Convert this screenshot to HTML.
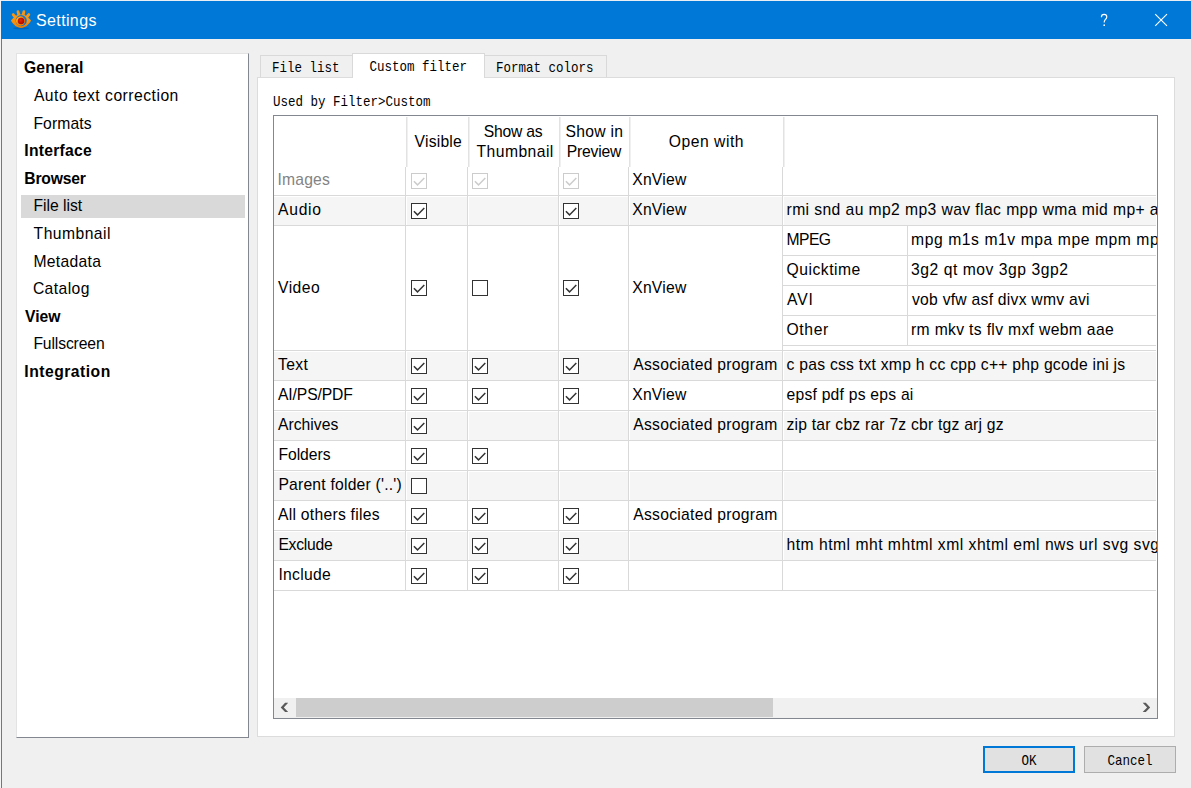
<!DOCTYPE html>
<html>
<head>
<meta charset="utf-8">
<title>Settings</title>
<style>
*{box-sizing:border-box;margin:0;padding:0}
html,body{width:1191px;height:788px;overflow:hidden;background:#f0f0f0}
body{font-family:"Liberation Sans",sans-serif;font-size:15px;color:#000;position:relative}
.abs{position:absolute}
#desk-top{left:0;top:0;width:1191px;height:1px;background:#e9eef5}
#desk-left{left:0;top:0;width:1px;height:788px;background:#f4f4f4}
#titlebar{left:1px;top:1px;width:1190px;height:38px;background:#0078d7}
#lborder{left:1px;top:39px;width:1px;height:749px;background:#2b8ad9}
#title{top:11px;color:#fff;font-size:16px;line-height:20px;white-space:nowrap}
/* sidebar */
#side{left:16px;top:53px;width:233px;height:685px;background:#fff;border:1px solid;border-color:#e3e3e3 #828790 #828790 #e3e3e3}
.nav{position:absolute;white-space:nowrap;line-height:20px;height:20px;font-size:15px}
.nav.b{font-weight:bold;left:25px}
.nav.s{left:34px}
#sel{left:21px;top:195px;width:224px;height:23px;background:#d9d9d9}
/* content */
#panel{left:257px;top:77px;width:918px;height:660px;background:#fff;border:1px solid #dcdcdc}
.tab{position:absolute;background:#f0f0f0;border:1px solid #d9d9d9;border-bottom:none}
.mono{font-family:"Liberation Mono",monospace;font-size:12.5px;white-space:nowrap;position:absolute;line-height:16px;transform-origin:0 50%;transform:scaleY(1.2);color:#000}
/* table */
#box{left:273px;top:115px;width:885px;height:604px;border:1px solid #828790;background:#fff;overflow:hidden}
.hl{position:absolute;height:1px;background:#d9d9d9}
.vl{position:absolute;width:1px;background:#d9d9d9}
.alt{position:absolute;background:#f5f5f5;left:0;width:883px;height:29px}
.t{position:absolute;white-space:nowrap;line-height:20px;height:20px;font-size:15.7px}
.th{position:absolute;text-align:center;line-height:20px;font-size:15px;white-space:nowrap}
.cb{position:absolute;width:16px;height:16px;border:1px solid #333;background:#fff}
.cb.dis{border-color:#ccc}
.cb svg{position:absolute;left:-1px;top:-1px}
.btn{position:absolute;top:746px;width:92px;height:27px;background:#e1e1e1;border:1px solid #adadad}
</style>
</head>
<body>
<div class="abs" id="desk-top"></div>
<div class="abs" id="desk-left"></div>
<div class="abs" id="titlebar"></div>
<div class="abs" id="lborder"></div>
<svg class="abs" style="left:6px;top:5px" width="30" height="30" viewBox="6 5 30 30">
<defs>
<radialGradient id="gp" cx="0.42" cy="0.4" r="0.65"><stop offset="0" stop-color="#e02c08"/><stop offset="0.55" stop-color="#c41200"/><stop offset="1" stop-color="#a00b00"/></radialGradient>
<linearGradient id="gb" x1="0" y1="0" x2="0" y2="1"><stop offset="0" stop-color="#ff9c10"/><stop offset="0.6" stop-color="#f98f0c"/><stop offset="1" stop-color="#ea7c05"/></linearGradient>
</defs>
<ellipse cx="21" cy="28.3" rx="8" ry="1" fill="#083a70" opacity="0.3"/>
<g stroke="#fc950f" stroke-width="2.8" stroke-linecap="round" fill="none">
<path d="M19 15.6 L18 11.6"/>
<path d="M23 15.6 L23.9 11.6"/>
<path d="M16 18 L13.2 14.6"/>
<path d="M26 18 L28.8 14.6"/>
</g>
<path d="M11 20.6 C12.6 18.6 14.4 16.8 16.4 15.6 C19.2 14.2 22.8 14.2 25.6 15.6 C27.6 16.8 29.4 18.6 31 20.6 C28.6 25.2 25 27.9 21 27.9 C17 27.9 13.4 25.2 11 20.6 Z" fill="url(#gb)"/>
<circle cx="21.2" cy="20.6" r="5.6" fill="#1672cc"/>
<circle cx="20.4" cy="21.1" r="4.6" fill="#f48808"/>
<path d="M16.6 22.8 A4.6 4.6 0 0 1 23.6 17.4 A5.6 5.6 0 0 0 16.6 22.8Z" fill="#ffae1c"/>
<circle cx="21.1" cy="21" r="3.2" fill="url(#gp)"/>
</svg>
<div class="abs" id="title" style="left:36px;letter-spacing:0.37px">Settings</div>
<svg class="abs" style="left:1095px;top:10px" width="80" height="20" viewBox="1095 10 80 20">
<path d="M1101.4 17.2 C1101.4 15.4 1102.6 14.4 1104.1 14.4 C1105.7 14.4 1106.8 15.4 1106.8 16.9 C1106.8 18.3 1105.9 19 1105.1 19.8 C1104.4 20.5 1104.2 21 1104.2 22.6" fill="none" stroke="#fff" stroke-width="1.15"/>
<circle cx="1104.2" cy="25.2" r="0.85" fill="#fff"/>
<path d="M1155.2 14.1 L1167 25.9 M1167 14.1 L1155.2 25.9" fill="none" stroke="#fff" stroke-width="1.15"/>
</svg>

<!-- sidebar -->
<div class="abs" id="side"></div>
<div class="abs" id="sel"></div>
<div class="t" style="font-weight:bold;left:24.0px;top:58px;letter-spacing:0.167px">General</div>
<div class="t" style="left:33.9px;top:86px;letter-spacing:0.489px">Auto text correction</div>
<div class="t" style="left:33.4px;top:114px;letter-spacing:0.1px">Formats</div>
<div class="t" style="font-weight:bold;left:24.3px;top:141px;letter-spacing:0.25px">Interface</div>
<div class="t" style="font-weight:bold;left:24.3px;top:169px;letter-spacing:-0.217px">Browser</div>
<div class="t" style="left:33.4px;top:196px;letter-spacing:-0.013px">File list</div>
<div class="t" style="left:33.6px;top:224px;letter-spacing:0.45px">Thumbnail</div>
<div class="t" style="left:33.4px;top:252px;letter-spacing:0.314px">Metadata</div>
<div class="t" style="left:32.9px;top:279px;letter-spacing:0.4px">Catalog</div>
<div class="t" style="font-weight:bold;left:25.0px;top:307px;letter-spacing:0.033px">View</div>
<div class="t" style="left:33.4px;top:334px;letter-spacing:-0.122px">Fullscreen</div>
<div class="t" style="font-weight:bold;left:24.3px;top:362px;letter-spacing:0.49px">Integration</div>

<!-- content panel -->
<div class="abs" id="panel"></div>

<!-- tabs -->
<div class="tab" style="left:260px;top:55px;width:93px;height:22px"></div>
<div class="tab" style="left:484px;top:55px;width:123px;height:22px;border-left:none"></div>
<div class="tab" style="left:352px;top:53px;width:133px;height:25px;background:#fff"></div>
<div class="mono" style="left:272px;top:59.7px">File list</div>
<div class="mono" style="left:369.5px;top:58.7px">Custom filter</div>
<div class="mono" style="left:496px;top:59.7px">Format colors</div>
<div class="mono" style="left:273px;top:93.7px">Used by Filter&gt;Custom</div>

<div class="abs" id="box">
<div class="alt" style="top:80px;height:29px"></div>
<div class="alt" style="top:235px;height:29px"></div>
<div class="alt" style="top:295px;height:29px"></div>
<div class="alt" style="top:355px;height:29px"></div>
<div class="alt" style="top:415px;height:29px"></div>
<div class="hl" style="left:0;top:80px;width:883px;background:#fff"></div>
<div class="hl" style="left:0;top:235px;width:883px;background:#fff"></div>
<div class="hl" style="left:0;top:295px;width:883px;background:#fff"></div>
<div class="hl" style="left:0;top:355px;width:883px;background:#fff"></div>
<div class="hl" style="left:0;top:415px;width:883px;background:#fff"></div>
<div class="vl" style="left:132px;top:50px;height:425px;background:#fff"></div>
<div class="vl" style="left:194px;top:50px;height:425px;background:#fff"></div>
<div class="vl" style="left:285px;top:50px;height:425px;background:#fff"></div>
<div class="vl" style="left:355px;top:50px;height:425px;background:#fff"></div>
<div class="vl" style="left:509px;top:50px;height:425px;background:#fff"></div>
<div class="hl" style="left:0;top:79px;width:883px"></div>
<div class="hl" style="left:0;top:109px;width:883px"></div>
<div class="hl" style="left:0;top:234px;width:883px"></div>
<div class="hl" style="left:0;top:264px;width:883px"></div>
<div class="hl" style="left:0;top:294px;width:883px"></div>
<div class="hl" style="left:0;top:324px;width:883px"></div>
<div class="hl" style="left:0;top:354px;width:883px"></div>
<div class="hl" style="left:0;top:384px;width:883px"></div>
<div class="hl" style="left:0;top:414px;width:883px"></div>
<div class="hl" style="left:0;top:444px;width:883px"></div>
<div class="hl" style="left:0;top:474px;width:883px"></div>
<div class="vl" style="left:131px;top:51px;height:424px"></div>
<div class="vl" style="left:193px;top:51px;height:424px"></div>
<div class="vl" style="left:284px;top:51px;height:424px"></div>
<div class="vl" style="left:354px;top:51px;height:424px"></div>
<div class="vl" style="left:508px;top:51px;height:424px"></div>
<div class="vl" style="left:132px;top:1px;height:50px;width:2px;background:linear-gradient(to right,#e2e2e2 50%,#f0f0f0 50%)"></div>
<div class="vl" style="left:194px;top:1px;height:50px;width:2px;background:linear-gradient(to right,#e2e2e2 50%,#f0f0f0 50%)"></div>
<div class="vl" style="left:285px;top:1px;height:50px;width:2px;background:linear-gradient(to right,#e2e2e2 50%,#f0f0f0 50%)"></div>
<div class="vl" style="left:355px;top:1px;height:50px;width:2px;background:linear-gradient(to right,#e2e2e2 50%,#f0f0f0 50%)"></div>
<div class="vl" style="left:509px;top:1px;height:50px;width:2px;background:linear-gradient(to right,#e2e2e2 50%,#f0f0f0 50%)"></div>
<div class="vl" style="left:882px;top:0;height:582px;background:#fff"></div>
<div class="t" style="left:140.6px;top:16px;letter-spacing:0.2px">Visible</div>
<div class="t" style="left:209.7px;top:6px;letter-spacing:-0.217px">Show as</div>
<div class="t" style="left:202.5px;top:26px;letter-spacing:0.45px">Thumbnail</div>
<div class="t" style="left:291.6px;top:6px;letter-spacing:0.267px">Show in</div>
<div class="t" style="left:292.8px;top:26px;letter-spacing:-0.2px">Preview</div>
<div class="t" style="left:394.7px;top:16px;letter-spacing:0.525px">Open with</div>
<div class="t" style="color:#838383;left:3.5px;top:54px;letter-spacing:0.16px">Images</div>
<div class="cb dis" style="left:137px;top:57px"><svg width="16" height="16" viewBox="0 0 16 16"><path d="M2.9 8.3 L6.5 11.9 L13.3 4.9" fill="none" stroke="#cccccc" stroke-width="1.5"/></svg></div>
<div class="cb dis" style="left:198px;top:57px"><svg width="16" height="16" viewBox="0 0 16 16"><path d="M2.9 8.3 L6.5 11.9 L13.3 4.9" fill="none" stroke="#cccccc" stroke-width="1.5"/></svg></div>
<div class="cb dis" style="left:289px;top:57px"><svg width="16" height="16" viewBox="0 0 16 16"><path d="M2.9 8.3 L6.5 11.9 L13.3 4.9" fill="none" stroke="#cccccc" stroke-width="1.5"/></svg></div>
<div class="t" style="left:358.2px;top:54px;letter-spacing:0.24px">XnView</div>
<div class="t" style="left:4.0px;top:84px;letter-spacing:0.725px">Audio</div>
<div class="cb" style="left:137px;top:87px"><svg width="16" height="16" viewBox="0 0 16 16"><path d="M2.9 8.3 L6.5 11.9 L13.3 4.9" fill="none" stroke="#333333" stroke-width="1.5"/></svg></div>
<div class="cb" style="left:289px;top:87px"><svg width="16" height="16" viewBox="0 0 16 16"><path d="M2.9 8.3 L6.5 11.9 L13.3 4.9" fill="none" stroke="#333333" stroke-width="1.5"/></svg></div>
<div class="t" style="left:358.2px;top:84px;letter-spacing:0.24px">XnView</div>
<div class="t" style="left:512.5px;top:84px;letter-spacing:0.402px">rmi snd au mp2 mp3 wav flac mpp wma mid mp+ aif aiff ogg</div>
<div class="t" style="left:4.0px;top:162px;letter-spacing:0.45px">Video</div>
<div class="cb" style="left:137px;top:164px"><svg width="16" height="16" viewBox="0 0 16 16"><path d="M2.9 8.3 L6.5 11.9 L13.3 4.9" fill="none" stroke="#333333" stroke-width="1.5"/></svg></div>
<div class="cb" style="left:198px;top:164px"></div>
<div class="cb" style="left:289px;top:164px"><svg width="16" height="16" viewBox="0 0 16 16"><path d="M2.9 8.3 L6.5 11.9 L13.3 4.9" fill="none" stroke="#333333" stroke-width="1.5"/></svg></div>
<div class="t" style="left:358.2px;top:162px;letter-spacing:0.24px">XnView</div>
<div class="t" style="left:4.0px;top:239px;letter-spacing:0.4px">Text</div>
<div class="cb" style="left:137px;top:242px"><svg width="16" height="16" viewBox="0 0 16 16"><path d="M2.9 8.3 L6.5 11.9 L13.3 4.9" fill="none" stroke="#333333" stroke-width="1.5"/></svg></div>
<div class="cb" style="left:198px;top:242px"><svg width="16" height="16" viewBox="0 0 16 16"><path d="M2.9 8.3 L6.5 11.9 L13.3 4.9" fill="none" stroke="#333333" stroke-width="1.5"/></svg></div>
<div class="cb" style="left:289px;top:242px"><svg width="16" height="16" viewBox="0 0 16 16"><path d="M2.9 8.3 L6.5 11.9 L13.3 4.9" fill="none" stroke="#333333" stroke-width="1.5"/></svg></div>
<div class="t" style="left:359.2px;top:239px;letter-spacing:0.276px">Associated program</div>
<div class="t" style="left:512.5px;top:239px;letter-spacing:0.254px">c pas css txt xmp h cc cpp c++ php gcode ini js</div>
<div class="t" style="left:4.0px;top:269px;letter-spacing:-0.125px">AI/PS/PDF</div>
<div class="cb" style="left:137px;top:272px"><svg width="16" height="16" viewBox="0 0 16 16"><path d="M2.9 8.3 L6.5 11.9 L13.3 4.9" fill="none" stroke="#333333" stroke-width="1.5"/></svg></div>
<div class="cb" style="left:198px;top:272px"><svg width="16" height="16" viewBox="0 0 16 16"><path d="M2.9 8.3 L6.5 11.9 L13.3 4.9" fill="none" stroke="#333333" stroke-width="1.5"/></svg></div>
<div class="cb" style="left:289px;top:272px"><svg width="16" height="16" viewBox="0 0 16 16"><path d="M2.9 8.3 L6.5 11.9 L13.3 4.9" fill="none" stroke="#333333" stroke-width="1.5"/></svg></div>
<div class="t" style="left:358.2px;top:269px;letter-spacing:0.24px">XnView</div>
<div class="t" style="left:512.5px;top:269px;letter-spacing:0.229px">epsf pdf ps eps ai</div>
<div class="t" style="left:4.0px;top:299px;letter-spacing:0.014px">Archives</div>
<div class="cb" style="left:137px;top:302px"><svg width="16" height="16" viewBox="0 0 16 16"><path d="M2.9 8.3 L6.5 11.9 L13.3 4.9" fill="none" stroke="#333333" stroke-width="1.5"/></svg></div>
<div class="t" style="left:359.2px;top:299px;letter-spacing:0.276px">Associated program</div>
<div class="t" style="left:512.5px;top:299px;letter-spacing:0.219px">zip tar cbz rar 7z cbr tgz arj gz</div>
<div class="t" style="left:4.4px;top:329px;letter-spacing:-0.033px">Folders</div>
<div class="cb" style="left:137px;top:332px"><svg width="16" height="16" viewBox="0 0 16 16"><path d="M2.9 8.3 L6.5 11.9 L13.3 4.9" fill="none" stroke="#333333" stroke-width="1.5"/></svg></div>
<div class="cb" style="left:198px;top:332px"><svg width="16" height="16" viewBox="0 0 16 16"><path d="M2.9 8.3 L6.5 11.9 L13.3 4.9" fill="none" stroke="#333333" stroke-width="1.5"/></svg></div>
<div class="t" style="left:4.4px;top:359px;letter-spacing:0.211px">Parent folder (&#x27;..&#x27;)</div>
<div class="cb" style="left:137px;top:362px"></div>
<div class="t" style="left:4.0px;top:389px;letter-spacing:0.26px">All others files</div>
<div class="cb" style="left:137px;top:392px"><svg width="16" height="16" viewBox="0 0 16 16"><path d="M2.9 8.3 L6.5 11.9 L13.3 4.9" fill="none" stroke="#333333" stroke-width="1.5"/></svg></div>
<div class="cb" style="left:198px;top:392px"><svg width="16" height="16" viewBox="0 0 16 16"><path d="M2.9 8.3 L6.5 11.9 L13.3 4.9" fill="none" stroke="#333333" stroke-width="1.5"/></svg></div>
<div class="cb" style="left:289px;top:392px"><svg width="16" height="16" viewBox="0 0 16 16"><path d="M2.9 8.3 L6.5 11.9 L13.3 4.9" fill="none" stroke="#333333" stroke-width="1.5"/></svg></div>
<div class="t" style="left:359.2px;top:389px;letter-spacing:0.276px">Associated program</div>
<div class="t" style="left:4.4px;top:419px;letter-spacing:-0.233px">Exclude</div>
<div class="cb" style="left:137px;top:422px"><svg width="16" height="16" viewBox="0 0 16 16"><path d="M2.9 8.3 L6.5 11.9 L13.3 4.9" fill="none" stroke="#333333" stroke-width="1.5"/></svg></div>
<div class="cb" style="left:198px;top:422px"><svg width="16" height="16" viewBox="0 0 16 16"><path d="M2.9 8.3 L6.5 11.9 L13.3 4.9" fill="none" stroke="#333333" stroke-width="1.5"/></svg></div>
<div class="cb" style="left:289px;top:422px"><svg width="16" height="16" viewBox="0 0 16 16"><path d="M2.9 8.3 L6.5 11.9 L13.3 4.9" fill="none" stroke="#333333" stroke-width="1.5"/></svg></div>
<div class="t" style="left:512.5px;top:419px;letter-spacing:0.488px">htm html mht mhtml xml xhtml eml nws url svg svgz db ini</div>
<div class="t" style="left:4.4px;top:449px;letter-spacing:0.3px">Include</div>
<div class="cb" style="left:137px;top:452px"><svg width="16" height="16" viewBox="0 0 16 16"><path d="M2.9 8.3 L6.5 11.9 L13.3 4.9" fill="none" stroke="#333333" stroke-width="1.5"/></svg></div>
<div class="cb" style="left:198px;top:452px"><svg width="16" height="16" viewBox="0 0 16 16"><path d="M2.9 8.3 L6.5 11.9 L13.3 4.9" fill="none" stroke="#333333" stroke-width="1.5"/></svg></div>
<div class="cb" style="left:289px;top:452px"><svg width="16" height="16" viewBox="0 0 16 16"><path d="M2.9 8.3 L6.5 11.9 L13.3 4.9" fill="none" stroke="#333333" stroke-width="1.5"/></svg></div>
<div class="t" style="left:512.5px;top:114px;letter-spacing:-0.567px">MPEG</div>
<div class="t" style="left:637.0px;top:114px;letter-spacing:0.564px">mpg m1s m1v mpa mpe mpm mpv mpeg m2v</div>
<div class="hl" style="left:509px;top:139px;width:373px"></div>
<div class="t" style="left:512.5px;top:144px;letter-spacing:0.513px">Quicktime</div>
<div class="t" style="left:637.0px;top:144px;letter-spacing:0.528px">3g2 qt mov 3gp 3gp2</div>
<div class="hl" style="left:509px;top:169px;width:373px"></div>
<div class="t" style="left:513.0px;top:174px;letter-spacing:0.9px">AVI</div>
<div class="t" style="left:638.0px;top:174px;letter-spacing:0.252px">vob vfw asf divx wmv avi</div>
<div class="hl" style="left:509px;top:199px;width:373px"></div>
<div class="t" style="left:512.5px;top:204px;letter-spacing:0.65px">Other</div>
<div class="t" style="left:637.0px;top:204px;letter-spacing:0.332px">rm mkv ts flv mxf webm aae</div>
<div class="hl" style="left:509px;top:229px;width:373px"></div>
<div class="vl" style="left:633px;top:110px;height:119px"></div>
<div class="abs" style="left:0;top:582px;width:883px;height:20px;background:#f0f0f0"></div>
<div class="abs" style="left:22px;top:582px;width:477px;height:19px;background:#cdcdcd"></div>
<svg class="abs" style="left:0px;top:582px" width="883" height="20" viewBox="274 698 883 20"><path d="M288.2 702.8 L285.1 702.8 L280.7 707.4 L285.1 712 L288.2 712 L283.8 707.4 Z M1142.7 702.8 L1145.8 702.8 L1150.2 707.4 L1145.8 712 L1142.7 712 L1147.1 707.4 Z" fill="#5a5a5a"/></svg>
</div>

<!-- buttons -->
<div class="btn" style="left:983px;border:2px solid #0078d7"></div>
<div class="btn" style="left:1084px"></div>
<div class="mono" style="left:1021.5px;top:752.7px">OK</div>
<div class="mono" style="left:1107.5px;top:752.7px">Cancel</div>
</body>
</html>
